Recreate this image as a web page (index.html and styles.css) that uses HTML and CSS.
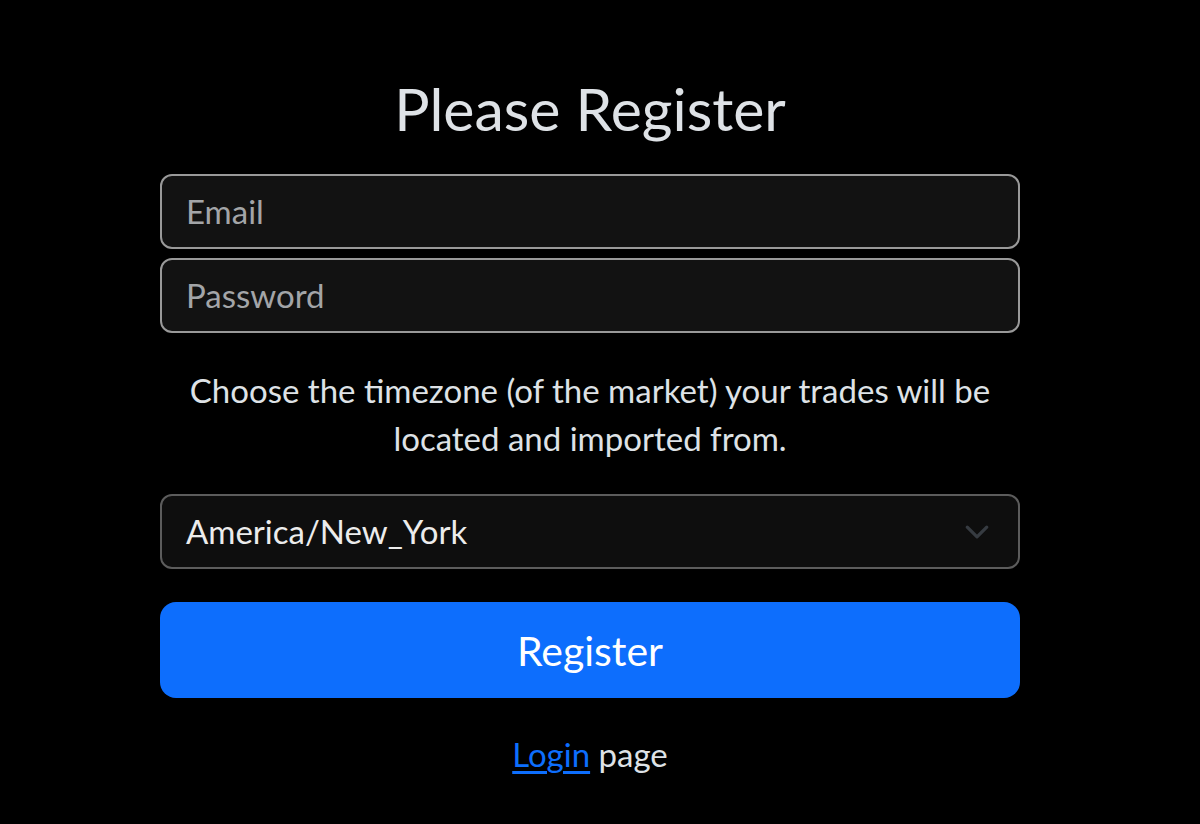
FILE: index.html
```html
<!DOCTYPE html>
<html lang="en">
<head>
<meta charset="utf-8">
<title>Please Register</title>
<link rel="stylesheet" href="styles.css">
</head>
<body>
<main class="page">
  <form class="register">
    <h3 class="title">Please Register</h3>
    <div class="field"><span class="placeholder">Email</span></div>
    <div class="field"><span class="placeholder">Password</span></div>
    <p class="note">Choose the timezone (of the market) your trades will be located and imported from.</p>
    <div class="select">
      <span class="value">America/New_York</span>
      <svg class="chevron" viewBox="0 0 16 16" width="26" height="26"><path d="m2 5 6 6 6-6" fill="none" stroke="#363b41" stroke-width="2" stroke-linecap="round" stroke-linejoin="round"/></svg>
    </div>
    <button type="button" class="btn">Register</button>
    <p class="footer"><a href="#" class="link">Login</a> page</p>
  </form>
</main>
</body>
</html>
```

FILE: styles.css
```css
html, body {
  margin: 0;
  padding: 0;
  background: #000;
}
body {
  font-family: Lato, "Noto Sans", sans-serif;
  color: #dee2e6;
  font-size: 33px;
  line-height: 1.5;
}
.page {
  display: flex;
  justify-content: center;
  padding: 75px 20px 0 0;
}
.register {
  width: 860px;
  display: flex;
  flex-direction: column;
}
.title {
  margin: 0 0 31px;
  font-size: 59px;
  font-weight: 400;
  line-height: 1.16;
  text-align: center;
}
.field {
  height: 75px;
  box-sizing: border-box;
  border: 2px solid #999;
  border-radius: 12px;
  background: #121212;
  padding: 0 24px;
  display: flex;
  align-items: center;
  margin-bottom: 9px;
}
.placeholder {
  color: #a3a5a8;
}
.note {
  margin: 24px 0 32px;
  line-height: 48px;
  text-align: center;
}
.select {
  height: 75px;
  box-sizing: border-box;
  border: 2px solid #5c5c5c;
  border-radius: 12px;
  background: #0e0e0e;
  padding: 0 24px;
  display: flex;
  align-items: center;
  justify-content: space-between;
}
.value {
  color: #ececec;
}
.chevron {
  display: block;
  margin-right: 4px;
}
.btn {
  margin-top: 33px;
  height: 96px;
  border: none;
  border-radius: 16px;
  background: #0d6efd;
  color: #fff;
  font-family: inherit;
  font-size: 41px;
  line-height: 1.5;
}
.footer {
  margin: 32px 0 0;
  line-height: 48px;
  text-align: center;
}
.link {
  color: #0d6efd;
  text-decoration: underline;
  text-underline-offset: 4px;
}
```
